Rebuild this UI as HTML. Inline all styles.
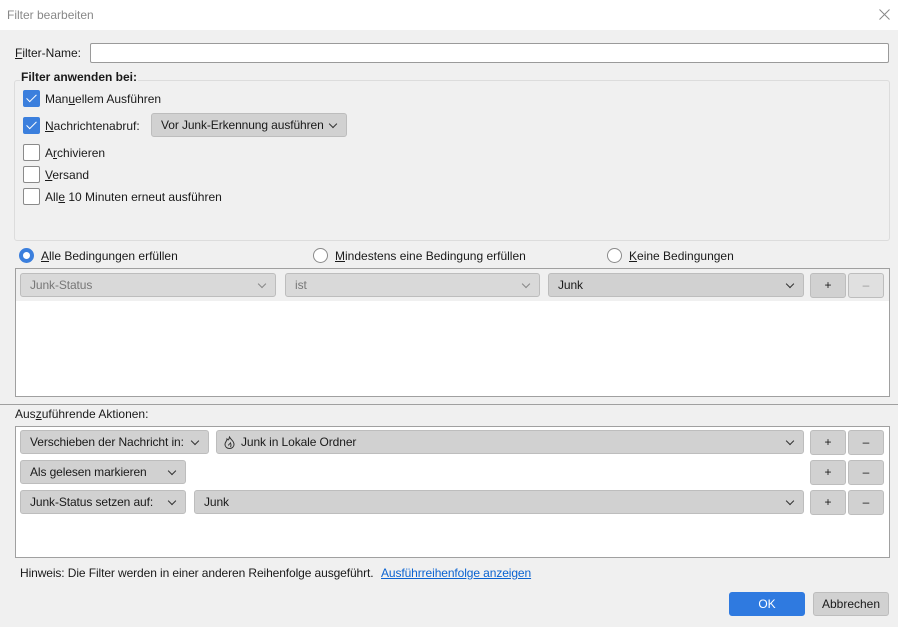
<!DOCTYPE html>
<html><head><meta charset="utf-8"><style>
*{box-sizing:border-box;margin:0;padding:0}
body{width:898px;height:627px;background:#f0f0f0;font-family:"Liberation Sans",sans-serif;font-size:12px;color:#1a1a1a;position:relative;overflow:hidden}
.a{position:absolute}
.t{position:absolute;line-height:14px;white-space:nowrap}
.cb{position:absolute;width:17px;height:17px;border:1px solid #8a8a8a;background:#fff;border-radius:2px}
.cb.on{background:#3b7fdd;border-color:#3b7fdd}
.cb.on:after{content:"";position:absolute;left:5px;top:1px;width:4px;height:9px;border:solid #fff;border-width:0 1.5px 1.5px 0;transform:rotate(45deg)}
.dd{position:absolute;background:#d1d1d1;border:1px solid #bdbdbd;border-radius:3px;height:24px;line-height:22px;padding-left:9px;white-space:nowrap;letter-spacing:-0.1px}
.dd .ch{position:absolute;right:10px;top:7px;width:6px;height:6px;border:solid #333;border-width:0 1px 1px 0;transform:rotate(45deg)}
.dd.dis{color:#777;background:#d9d9d9}
.dd.dis .ch{border-color:#888}
.btn{position:absolute;background:#d1d1d1;border:1px solid #bdbdbd;border-radius:3px;height:25px;text-align:center;line-height:23px}
.rd{position:absolute;width:15px;height:15px;border-radius:50%;border:1px solid #8a8a8a;background:#fff}
.rd.on{border:4px solid #3b7fdd}
u{text-decoration:underline}
</style></head><body>
<div class="a" style="left:0;top:0;width:898px;height:30px;background:#fff"></div>
<div class="t" style="left:7px;top:8px;color:#888">Filter bearbeiten</div>
<svg class="a" style="left:879px;top:9px" width="11" height="11"><path d="M0.5 0.5L10.5 10.5M10.5 0.5L0.5 10.5" stroke="#888" stroke-width="1"/></svg>

<div class="t" style="left:15px;top:46px"><u>F</u>ilter-Name:</div>
<div class="a" style="left:90px;top:43px;width:799px;height:20px;background:#fff;border:1px solid #9a9a9a;border-radius:2px"></div>

<div class="a" style="left:14px;top:80px;width:876px;height:161px;border:1px solid #dcdcdc;border-radius:3px"></div>
<div class="t" style="left:20px;top:70px;font-weight:bold;background:#f0f0f0;padding:0 1px">Filter anwenden bei:</div>
<div class="cb on" style="left:23px;top:90px"></div><div class="t" style="left:45px;top:92px">Man<u>u</u>ellem Ausführen</div>
<div class="cb on" style="left:23px;top:117px"></div><div class="t" style="left:45px;top:119px"><u>N</u>achrichtenabruf:</div>
<div class="dd" style="left:151px;top:113px;width:196px">Vor Junk-Erkennung ausführen<span class="ch"></span></div>
<div class="cb" style="left:23px;top:144px"></div><div class="t" style="left:45px;top:146px">A<u>r</u>chivieren</div>
<div class="cb" style="left:23px;top:166px"></div><div class="t" style="left:45px;top:168px"><u>V</u>ersand</div>
<div class="cb" style="left:23px;top:188px"></div><div class="t" style="left:45px;top:190px">All<u>e</u> 10 Minuten erneut ausführen</div>

<div class="rd on" style="left:19px;top:248px"></div><div class="t" style="left:41px;top:249px"><u>A</u>lle Bedingungen erfüllen</div>
<div class="rd" style="left:313px;top:248px"></div><div class="t" style="left:335px;top:249px"><u>M</u>indestens eine Bedingung erfüllen</div>
<div class="rd" style="left:607px;top:248px"></div><div class="t" style="left:629px;top:249px"><u>K</u>eine Bedingungen</div>

<div class="a" style="left:15px;top:268px;width:875px;height:129px;background:#fff;border:1px solid #a0a0a0"></div>
<div class="a" style="left:16px;top:269px;width:873px;height:32px;background:#f0f0f0"></div>
<div class="dd dis" style="left:20px;top:273px;width:256px">Junk-Status<span class="ch"></span></div>
<div class="dd dis" style="left:285px;top:273px;width:255px">ist<span class="ch"></span></div>
<div class="dd" style="left:548px;top:273px;width:256px">Junk<span class="ch"></span></div>
<div class="btn" style="left:810px;top:273px;width:36px">+</div>
<div class="btn" style="left:848px;top:273px;width:36px;background:#e0e0e0;color:#999">–</div>

<div class="a" style="left:0;top:404px;width:898px;height:1px;background:#a0a0a0"></div>
<div class="t" style="left:15px;top:407px">Aus<u>z</u>uführende Aktionen:</div>

<div class="a" style="left:15px;top:426px;width:875px;height:132px;background:#fff;border:1px solid #a0a0a0"></div>
<div class="dd" style="left:20px;top:430px;width:189px">Verschieben der Nachricht in:<span class="ch"></span></div>
<div class="dd" style="left:216px;top:430px;width:588px;padding-left:24px">Junk in Lokale Ordner<span class="ch"></span>
<svg class="a" style="left:7px;top:5px" width="11" height="13"><path d="M5.5 1C7 4 10 5 10 8.5A4.5 4 0 0 1 1 8.5C1 6 3 5 3 3C4 4 4.5 5 5.5 1Z M4.5 9.5C4.5 8 6 8 6.5 7C7 9 7.5 9 6.5 11" fill="none" stroke="#333" stroke-width="1"/></svg></div>
<div class="btn" style="left:810px;top:430px;width:36px">+</div>
<div class="btn" style="left:848px;top:430px;width:36px">–</div>
<div class="dd" style="left:20px;top:460px;width:166px">Als gelesen markieren<span class="ch"></span></div>
<div class="btn" style="left:810px;top:460px;width:36px">+</div>
<div class="btn" style="left:848px;top:460px;width:36px">–</div>
<div class="dd" style="left:20px;top:490px;width:166px">Junk-Status setzen auf:<span class="ch"></span></div>
<div class="dd" style="left:194px;top:490px;width:610px">Junk<span class="ch"></span></div>
<div class="btn" style="left:810px;top:490px;width:36px">+</div>
<div class="btn" style="left:848px;top:490px;width:36px">–</div>

<div class="t" style="left:20px;top:566px;letter-spacing:-0.1px">Hinweis: Die Filter werden in einer anderen Reihenfolge ausgeführt.</div>
<div class="t" style="left:381px;top:566px;color:#0a63d1;text-decoration:underline;letter-spacing:-0.1px">Ausführreihenfolge anzeigen</div>

<div class="btn" style="left:729px;top:592px;width:76px;height:24px;background:#2f7ae0;border-color:#2f7ae0;color:#fff;line-height:22px">OK</div>
<div class="btn" style="left:813px;top:592px;width:76px;height:24px;line-height:22px">Abbrechen</div>
</body></html>
